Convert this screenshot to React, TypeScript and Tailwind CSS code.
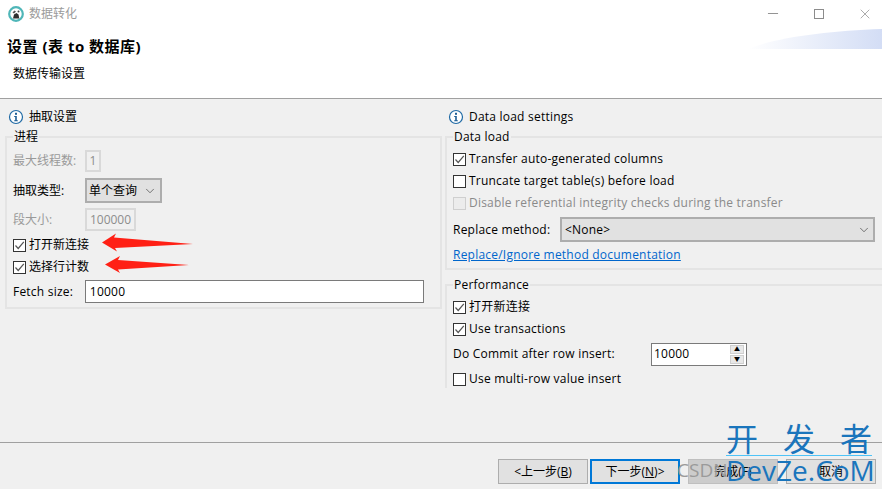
import { ChevronDown, Minus, X } from 'lucide-react';

const ui = 'font-["Open_Sans","Noto_Sans_CJK_SC",sans-serif]';
// latin labels run a bit wider in the original dialog font
const en = 'tracking-[0.22px]';

function InfoIcon() {
    return (
        <svg width="16" height="16" viewBox="0 0 16 16" className="shrink-0">
            <circle cx="8" cy="8" r="6.5" fill="#fff" stroke="#1f6aa5" strokeWidth="1.2" />
            <rect x="7" y="3.8" width="2" height="2" fill="#1f5f96" />
            <path d="M6.2 7h2.6v4.2h1v1H6.2v-1h1V8h-1z" fill="#1f5f96" />
        </svg>
    );
}

function Check({ label, checked, disabled }: { label: string; checked?: boolean; disabled?: boolean }) {
    return (
        <div className={`flex h-[22px] items-center gap-[3px] ${disabled ? 'text-[#8a8a8a]' : 'text-black'}`}>
            <span
                className={`flex size-[13px] items-center justify-center border ${
                    disabled ? 'border-[#cfcfcf] bg-[#ececec]' : 'border-[#333] bg-white'
                }`}
            >
                {checked && (
                    <svg width="11" height="11" viewBox="0 0 11 11">
                        <path d="M1.5 5.5 4.2 8.5 9.8 1.8" fill="none" stroke="#555" strokeWidth="1.2" />
                    </svg>
                )}
            </span>
            <span>{label}</span>
        </div>
    );
}

function Group({ legend, className, children }: { legend: string; className: string; children: React.ReactNode }) {
    return (
        <div className={`relative border-2 border-[#e4e4e4] ${className}`}>
            <span className="absolute -top-[9px] left-[6px] bg-[#f0f0f0] px-[1px] leading-[16px] text-black">
                {legend}
            </span>
            {children}
        </div>
    );
}

function Button({ label, hot, off }: { label: React.ReactNode; hot?: boolean; off?: boolean }) {
    const tone = hot
        ? 'border-2 border-[#0078d7] bg-[#e1e1e1]'
        : off
          ? 'border border-[#bfbfbf] bg-[#cccccc]'
          : 'border border-[#adadad] bg-[#e1e1e1]';
    return (
        <div className={`flex h-[25px] w-[90px] items-center justify-center text-[12px] text-black ${tone}`}>
            {label}
        </div>
    );
}

export default function App() {
    return (
        <div className={`relative flex h-[489px] w-[882px] flex-col overflow-hidden bg-[#f0f0f0] text-[12px] ${ui}`}>
            <div className="relative h-[99px] shrink-0 border-b border-[#a0a0a0] bg-white">
                <div className="flex h-[28px] items-center gap-[5px] pl-[8px] text-[#9b9b9b]">
                    <svg width="16" height="16" viewBox="0 0 16 16">
                        <circle cx="8" cy="8" r="6.8" fill="#fff" stroke="#4fb6b8" strokeWidth="2.2" />
                        <path d="M5 12.5 6 8.5 8.5 7l2 1.5.8 4z" fill="#2f2f2f" />
                        <path d="M4.5 6.5 6.5 4.5 8 5.5 6 7.5z" fill="#555" />
                        <circle cx="10.5" cy="5.5" r="1" fill="#444" />
                    </svg>
                    <span>数据转化</span>
                </div>
                <div className="pl-[7px] pt-[7px] text-[15px] leading-[22px] font-bold tracking-[0.5px] text-black">
                    设置 (表 to 数据库)
                </div>
                <div className="pl-[13px] pt-[8px] leading-[18px] text-black">数据传输设置</div>

                <div className="absolute top-0 right-0 flex h-[27px] items-center gap-[30px] pr-[9px] text-[#8c8c8c]">
                    <div className="flex w-[16px] justify-center">
                        <Minus size={17} strokeWidth={1.4} />
                    </div>
                    <div className="flex w-[16px] justify-center">
                        <span className="size-[10px] border border-[#8c8c8c]" />
                    </div>
                    <div className="flex w-[16px] justify-center">
                        <X size={20} strokeWidth={1.1} />
                    </div>
                </div>
                <svg width="134" height="20" viewBox="0 0 134 20" className="absolute top-[29px] right-0">
                    <defs>
                        <linearGradient id="sweep" x1="0" x2="1" y1="0" y2="0">
                            <stop offset="0" stopColor="#ffffff" />
                            <stop offset="1" stopColor="#d3ddf5" />
                        </linearGradient>
                    </defs>
                    <path d="M0 20C30 8 80 2 134 0V20Z" fill="url(#sweep)" />
                </svg>
            </div>

            <div className="flex h-[344px] shrink-0 border-b border-[#a0a0a0]">
                <div className="w-[445px] shrink-0 pt-[8px] pl-[5px]">
                    <div className="flex h-[20px] items-center gap-[5px] pl-[3px] text-black">
                        <InfoIcon />
                        <span>抽取设置</span>
                    </div>
                    <Group legend="进程" className="mt-[9px] h-[173px] w-[437px] pr-[16px] pl-[6px]">
                        <div className="mt-[11px] flex h-[24px] items-center text-[#9a9a9a]">
                            <span className="w-[72px]">最大线程数:</span>
                            <span className="flex h-[22px] w-[16px] items-center justify-center border-2 border-[#d9d9d9] text-[#8d8d8d]">
                                1
                            </span>
                        </div>
                        <div className="mt-[5px] flex h-[25px] items-center text-black">
                            <span className="w-[72px]">抽取类型:</span>
                            <span className="flex h-[25px] w-[77px] items-center justify-between border-2 border-[#adadad] bg-[#e1e1e1] pr-[3px] pl-[2px]">
                                单个查询
                                <ChevronDown size={14} strokeWidth={1.2} className="text-[#444]" />
                            </span>
                        </div>
                        <div className="mt-[5px] mb-[3px] flex h-[23px] items-center text-[#9a9a9a]">
                            <span className="w-[72px]">段大小:</span>
                            <span className="flex h-[23px] w-[51px] items-center justify-center border-2 border-[#d9d9d9] text-[#8d8d8d]">
                                100000
                            </span>
                        </div>
                        <Check label="打开新连接" checked />
                        <Check label="选择行计数" checked />
                        <div className={`mt-[2px] flex h-[23px] items-center text-black ${en}`}>
                            <span className="w-[72px]">Fetch size:</span>
                            <span className="flex h-[23px] w-[340px] items-center border border-[#7a7a7a] bg-white pl-[4px]">
                                10000
                            </span>
                        </div>
                    </Group>
                </div>

                <div className={`min-w-0 flex-1 pt-[8px] ${en}`}>
                    <div className="flex h-[20px] items-center gap-[5px] pl-[3px] text-black">
                        <InfoIcon />
                        <span>Data load settings</span>
                    </div>
                    <Group legend="Data load" className="mt-[9px] h-[134px] border-r-0 pl-[6px]">
                        <div className="mt-[10px]">
                            <Check label="Transfer auto-generated columns" checked />
                            <Check label="Truncate target table(s) before load" />
                            <Check label="Disable referential integrity checks during the transfer" disabled />
                        </div>
                        <div className="mt-[3px] flex h-[25px] items-center text-black">
                            <span className="w-[107px]">Replace method:</span>
                            <span className="flex h-[25px] w-[315px] items-center justify-between border-2 border-[#adadad] bg-[#e1e1e1] pr-[2px] pl-[3px]">
                                {'<None>'}
                                <ChevronDown size={14} strokeWidth={1.2} className="text-[#444]" />
                            </span>
                        </div>
                        <div className="mt-[4px] text-[#0066cc] underline">Replace/Ignore method documentation</div>
                    </Group>
                    <Group legend="Performance" className="mt-[14px] h-[104px] border-r-0 border-b-0 pl-[6px]">
                        <div className="mt-[10px]">
                            <Check label="打开新连接" checked />
                            <Check label="Use transactions" checked />
                        </div>
                        <div className="mt-[2px] flex h-[24px] items-center text-black">
                            <span className="w-[198px]">Do Commit after row insert:</span>
                            <span className="flex h-[23px] w-[96px] items-center justify-between border border-[#7a7a7a] bg-white pr-[2px] pl-[2px]">
                                10000
                                <span className="flex flex-col gap-[1px]">
                                    <span className="flex h-[9px] w-[14px] items-center justify-center border border-[#cfcfcf] bg-[#e8e8e8] text-[6px] leading-none">
                                        ▲
                                    </span>
                                    <span className="flex h-[9px] w-[14px] items-center justify-center border border-[#cfcfcf] bg-[#e8e8e8] text-[6px] leading-none">
                                        ▼
                                    </span>
                                </span>
                            </span>
                        </div>
                        <div className="mt-[2px]">
                            <Check label="Use multi-row value insert" />
                        </div>
                    </Group>
                </div>
            </div>

            <div className="flex flex-1 items-start justify-end gap-[2px] pt-[16px] pr-[6px]">
                <Button label={<span>&lt;上一步(<u>B</u>)</span>} />
                <Button label={<span>下一步(<u>N</u>)&gt;</span>} hot />
                <div className="ml-[6px]">
                    <Button label="完成(F)" off />
                </div>
                <div className="ml-[6px]">
                    <Button label="取消" />
                </div>
            </div>

            <svg width="91" height="20" viewBox="0 0 91 20" className="absolute top-[233px] left-[102px]">
                <path d="M0 9.5 14 .5 12 4.5 91 11 13 15 15 18.5Z" fill="#ff2015" />
            </svg>
            <svg width="84" height="20" viewBox="0 0 84 20" className="absolute top-[255px] left-[105px]">
                <path d="M0 9.5 15 1 13 5 84 10 13 14.5 15 18Z" fill="#ff2015" />
            </svg>

            <span className="absolute top-[458px] left-[677px] text-[19px] leading-[24px] text-[#9a9a9a]">CSDN</span>
            <div className="absolute top-[422px] left-[726px] w-[146px] text-[#1a75bc]">
                <div className="flex justify-between border-b border-[#4fc3f7] text-[32px] leading-[33px]">
                    <span>开</span>
                    <span>发</span>
                    <span>者</span>
                </div>
                <div className="text-center text-[28px] leading-[28px] whitespace-nowrap">DevZe.CoM</div>
            </div>
        </div>
    );
}
